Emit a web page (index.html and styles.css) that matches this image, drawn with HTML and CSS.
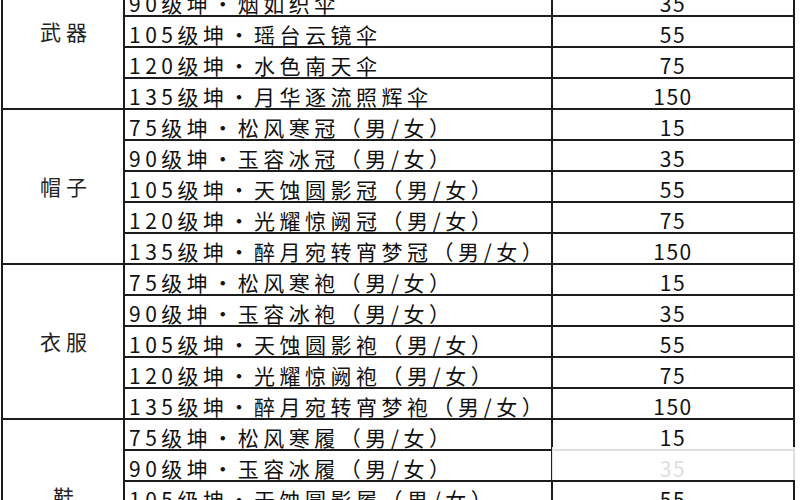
FILE: index.html
```html
<!DOCTYPE html>
<html lang="zh-CN">
<head>
<meta charset="utf-8">
<title>坤装备表</title>
<link rel="stylesheet" href="styles.css">
</head>
<body>
<table class="sheet">
  <colgroup>
    <col class="c-cat">
    <col class="c-item">
    <col class="c-val">
  </colgroup>
  <tbody>
    <tr><td class="cat" rowspan="5">武器</td><td class="item">75级坤·松风寒伞</td><td class="val">15</td></tr>
    <tr><td class="item">90级坤·烟如织伞</td><td class="val">35</td></tr>
    <tr><td class="item">105级坤·瑶台云镜伞</td><td class="val">55</td></tr>
    <tr><td class="item">120级坤·水色南天伞</td><td class="val">75</td></tr>
    <tr><td class="item">135级坤·月华逐流照辉伞</td><td class="val">150</td></tr>

    <tr><td class="cat" rowspan="5">帽子</td><td class="item">75级坤·松风寒冠（男/女）</td><td class="val">15</td></tr>
    <tr><td class="item">90级坤·玉容冰冠（男/女）</td><td class="val">35</td></tr>
    <tr><td class="item">105级坤·天蚀圆影冠（男/女）</td><td class="val">55</td></tr>
    <tr><td class="item">120级坤·光耀惊阙冠（男/女）</td><td class="val">75</td></tr>
    <tr><td class="item">135级坤·醉月宛转宵梦冠（男/女）</td><td class="val">150</td></tr>

    <tr><td class="cat" rowspan="5">衣服</td><td class="item">75级坤·松风寒袍（男/女）</td><td class="val">15</td></tr>
    <tr><td class="item">90级坤·玉容冰袍（男/女）</td><td class="val">35</td></tr>
    <tr><td class="item">105级坤·天蚀圆影袍（男/女）</td><td class="val">55</td></tr>
    <tr><td class="item">120级坤·光耀惊阙袍（男/女）</td><td class="val">75</td></tr>
    <tr><td class="item">135级坤·醉月宛转宵梦袍（男/女）</td><td class="val">150</td></tr>

    <tr><td class="cat" rowspan="5">鞋</td><td class="item">75级坤·松风寒履（男/女）</td><td class="val">15</td></tr>
    <tr><td class="item">90级坤·玉容冰履（男/女）</td><td class="val">35</td></tr>
    <tr><td class="item">105级坤·天蚀圆影履（男/女）</td><td class="val">55</td></tr>
    <tr><td class="item">120级坤·光耀惊阙履（男/女）</td><td class="val">75</td></tr>
    <tr><td class="item">135级坤·醉月宛转宵梦履（男/女）</td><td class="val">150</td></tr>
  </tbody>
</table>
<div class="watermark"></div>
</body>
</html>
```

FILE: styles.css
```css
html, body {
  margin: 0;
  padding: 0;
  background: #ffffff;
  overflow: hidden;
}

body {
  font-family: "Noto Sans CJK SC", "Noto Sans", sans-serif;
  color: #111111;
  position: relative;
  height: 500px;
}

.sheet {
  border-collapse: collapse;
  table-layout: fixed;
  width: 792px;
  margin: -47px 0 0 1px;
}

.c-cat { width: 122px; }
.c-item { width: 428px; }
.c-val { width: 242px; }

.sheet tr {
  height: 31px;
}

.sheet td {
  border: 2px solid #1c1c1c;
  padding: 6px 0 0;
  font-size: 21px;
  line-height: 23px;
  white-space: nowrap;
  overflow: hidden;
  vertical-align: top;
}

.sheet td.item {
  padding-left: 4px;
  letter-spacing: 4.5px;
}

.sheet td.val {
  text-align: center;
  letter-spacing: 1.5px;
}

.sheet td.cat {
  text-align: center;
  vertical-align: middle;
  padding: 0 0 0 6px;
  letter-spacing: 5px;
  color: #222222;
}

.watermark {
  position: absolute;
  left: 552px;
  top: 447px;
  width: 248px;
  height: 33px;
  background: rgba(255, 255, 255, 0.86);
}
```
